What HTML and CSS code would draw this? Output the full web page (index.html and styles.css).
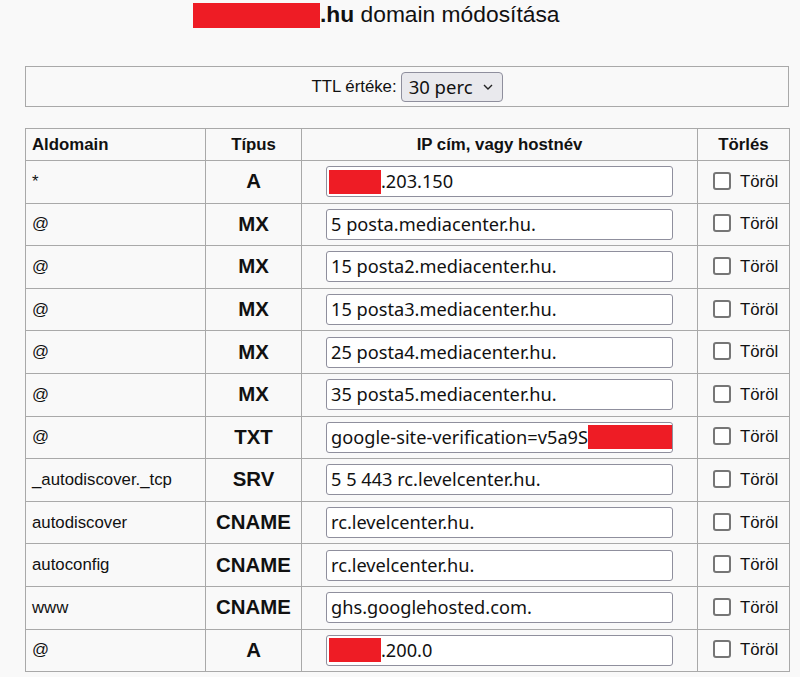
FILE: index.html
```html
<!DOCTYPE html>
<html lang="hu">
<head>
<meta charset="utf-8">
<title>domain módosítása</title>
<link rel="stylesheet" href="styles.css">
</head>
<body>
<div class="page">
  <h1 class="title"><span class="redact redact-title"></span><b>.hu</b> domain módosítása</h1>
  <div class="ttl-box">
    <label class="ttl-label">TTL értéke:</label>
    <span class="select">30 perc <svg class="chev" width="10" height="6" viewBox="0 0 10 6"><path d="M1 1l4 4 4-4" fill="none" stroke="#222" stroke-width="1.4"/></svg></span>
  </div>
  <table class="records">
    <colgroup>
      <col class="c1"><col class="c2"><col class="c3"><col class="c4">
    </colgroup>
    <thead>
      <tr><th class="left">Aldomain</th><th>Típus</th><th>IP cím, vagy hostnév</th><th>Törlés</th></tr>
    </thead>
    <tbody>
      <tr><td class="sub">*</td><td class="type">A</td><td class="val"><div class="inp"><span class="redact redact-ip"></span>.203.150</div></td><td class="del"><span class="cb"></span>Töröl</td></tr>
      <tr><td class="sub">@</td><td class="type">MX</td><td class="val"><div class="inp">5 posta.mediacenter.hu.</div></td><td class="del"><span class="cb"></span>Töröl</td></tr>
      <tr><td class="sub">@</td><td class="type">MX</td><td class="val"><div class="inp">15 posta2.mediacenter.hu.</div></td><td class="del"><span class="cb"></span>Töröl</td></tr>
      <tr><td class="sub">@</td><td class="type">MX</td><td class="val"><div class="inp">15 posta3.mediacenter.hu.</div></td><td class="del"><span class="cb"></span>Töröl</td></tr>
      <tr><td class="sub">@</td><td class="type">MX</td><td class="val"><div class="inp">25 posta4.mediacenter.hu.</div></td><td class="del"><span class="cb"></span>Töröl</td></tr>
      <tr><td class="sub">@</td><td class="type">MX</td><td class="val"><div class="inp">35 posta5.mediacenter.hu.</div></td><td class="del"><span class="cb"></span>Töröl</td></tr>
      <tr><td class="sub">@</td><td class="type">TXT</td><td class="val"><div class="inp">google-site-verification=v5a9S<span class="redact redact-txt"></span></div></td><td class="del"><span class="cb"></span>Töröl</td></tr>
      <tr><td class="sub">_autodiscover._tcp</td><td class="type">SRV</td><td class="val"><div class="inp">5 5 443 rc.levelcenter.hu.</div></td><td class="del"><span class="cb"></span>Töröl</td></tr>
      <tr><td class="sub">autodiscover</td><td class="type">CNAME</td><td class="val"><div class="inp">rc.levelcenter.hu.</div></td><td class="del"><span class="cb"></span>Töröl</td></tr>
      <tr><td class="sub">autoconfig</td><td class="type">CNAME</td><td class="val"><div class="inp">rc.levelcenter.hu.</div></td><td class="del"><span class="cb"></span>Töröl</td></tr>
      <tr><td class="sub">www</td><td class="type">CNAME</td><td class="val"><div class="inp">ghs.googlehosted.com.</div></td><td class="del"><span class="cb"></span>Töröl</td></tr>
      <tr><td class="sub">@</td><td class="type">A</td><td class="val"><div class="inp"><span class="redact redact-ip"></span>.200.0</div></td><td class="del"><span class="cb"></span>Töröl</td></tr>
    </tbody>
  </table>
</div>
</body>
</html>
```
FILE: styles.css
```css
html, body {
  margin: 0;
  padding: 0;
  background: #f9f9f9;
  color: #111;
  font-family: "Liberation Sans", Arial, sans-serif;
}
.page {
  width: 764px;
  margin-left: 25px;
}
.title {
  margin: 0;
  padding: 2px 0 0 168px;
  height: 66px;
  box-sizing: border-box;
  font-size: 22.8px;
  font-weight: normal;
  line-height: 25px;
  display: flex;
  align-items: flex-start;
  white-space: pre;
}
.title b { font-weight: bold; }
.redact {
  display: inline-block;
  background: #ee1c25;
  flex: none;
}
.redact-title {
  width: 127px;
  height: 25px;
  margin-top: 1px;
}
.ttl-box {
  height: 41px;
  box-sizing: border-box;
  border: 1px solid #a9a9a9;
  display: flex;
  align-items: center;
  justify-content: center;
  gap: 4px;
  font-size: 16.8px;
  padding-left: 0;
}
.select {
  display: inline-flex;
  align-items: center;
  gap: 10px;
  height: 30px;
  box-sizing: border-box;
  padding: 0 9px 0 7px;
  border: 1px solid #8f8f9d;
  border-radius: 4px;
  background: #e9e9ed;
  font-family: "Noto Sans", "Open Sans", sans-serif;
  font-size: 18.5px;
}
.chev { margin-top: 1px; }
.records {
  margin-top: 21px;
  width: 764px;
  border-collapse: collapse;
  table-layout: fixed;
  font-size: 16.8px;
}
.c1 { width: 180px; }
.c2 { width: 96px; }
.c3 { width: 396px; }
.c4 { width: 92px; }
.records th, .records td {
  border: 1px solid #a9a9a9;
  padding: 0 6px;
}
.records th {
  height: 31px;
  font-size: 16.8px;
  font-weight: bold;
  text-align: center;
}
.records th.left { text-align: left; }
.records td { height: 41.6px; }
.sub { text-align: left; }
.type {
  text-align: center;
  font-weight: bold;
  font-size: 20.4px;
}
.val { padding: 0 !important; }
.inp {
  margin-left: 24px;
  width: 347px;
  height: 31px;
  box-sizing: border-box;
  border: 1px solid #8f8f9d;
  border-radius: 3px;
  background: #fff;
  font-family: "Noto Sans", "Open Sans", sans-serif;
  font-size: 18.2px;
  line-height: 29px;
  padding: 0 4px;
  display: flex;
  align-items: center;
  white-space: nowrap;
  overflow: hidden;
}
.redact-ip {
  width: 52px;
  height: 24px;
  margin-left: -2px;
}
.redact-txt {
  width: 90px;
  height: 24px;
}
.del {
  white-space: nowrap;
  padding-left: 15px !important;
}
.cb {
  display: inline-block;
  width: 18px;
  height: 18px;
  box-sizing: border-box;
  border: 2px solid #767676;
  border-radius: 3px;
  background: #fff;
  vertical-align: -3px;
  margin-right: 9px;
}
```
